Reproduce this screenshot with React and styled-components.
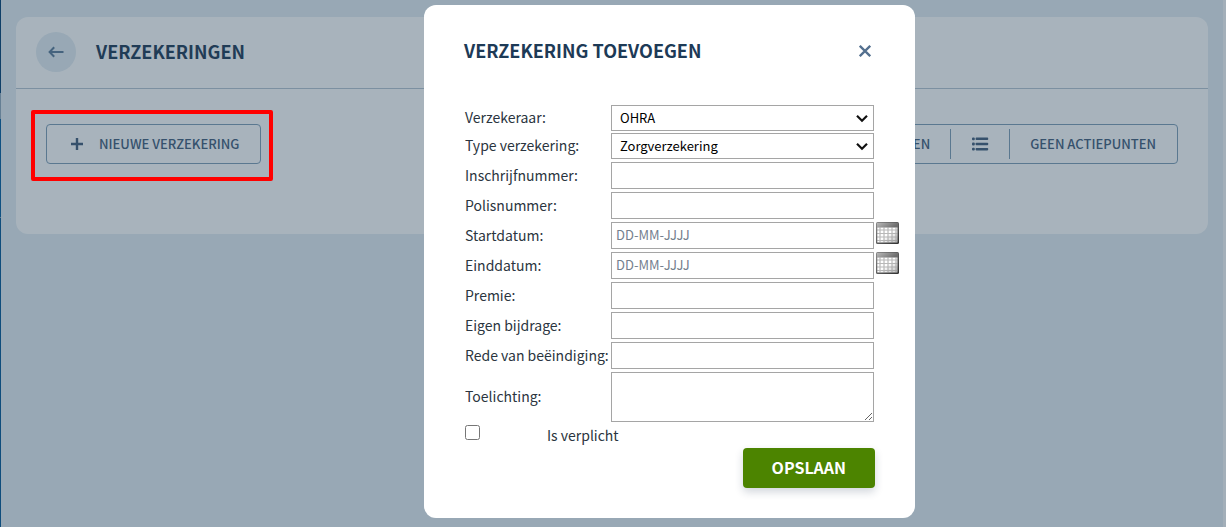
import React, { useState } from 'react';
import styled, { createGlobalStyle } from 'styled-components';

const GlobalStyle = createGlobalStyle`
  * {
    box-sizing: border-box;
  }
  body {
    margin: 0;
    background-color: #ffffff;
    color: #1d3a56;
    font-family: "Noto Sans CJK SC", "Noto Sans", sans-serif;
    font-size: 13px;
    line-height: 20px;
  }
  button, input, select, textarea {
    font-family: inherit;
    font-size: inherit;
    line-height: inherit;
  }
`;

const Styled = {
  Page: styled.div`
    display: flex;
    min-height: 100vh;
  `,
  SidebarEdge: styled.div`
    width: 1px;
    background-image: linear-gradient(
      to bottom,
      #003f74 0 93px,
      #8fa9bd 93px 119px,
      #005c9f 119px 217px,
      #7fa3c0 217px 218px,
      #005694 218px
    );
  `,
  Main: styled.main`
    flex: 1;
    padding: 17px 15px;
    background-color: #e4edf3;
  `,
  ScrollEdge: styled.div`
    width: 3px;
    background-color: #f7f9fb;
  `,
  Card: styled.section`
    border-radius: 12px;
    background-color: #ffffff;
  `,
  CardHeader: styled.header`
    display: flex;
    align-items: center;
    gap: 20px;
    padding: 15px 20px 16px;
    border-bottom: 1px solid #b6c5d2;
  `,
  BackButton: styled.button`
    display: flex;
    align-items: center;
    justify-content: center;
    width: 40px;
    height: 40px;
    padding: 0;
    border: 0;
    border-radius: 50%;
    background-color: #e4edf3;
    color: #5a7a98;
  `,
  Title: styled.h1`
    margin: 0;
    padding-bottom: 1px;
    font-size: 18px;
    font-weight: 700;
    line-height: 23px;
  `,
  Toolbar: styled.div`
    display: flex;
    justify-content: space-between;
    padding: 35px 30px 70px;
  `,
  Marked: styled.div`
    position: relative;
  `,
  Mark: styled.div`
    position: absolute;
    inset: -14px -12px -17px -15px;
    z-index: 20;
    border: 4px solid #ff0000;
    border-radius: 2px;
    pointer-events: none;
  `,
  ButtonGroup: styled.div`
    display: flex;
    align-items: center;
    height: 40px;
    padding: 0 1px;
    border: 1px solid #7d9db6;
    border-radius: 4px;
  `,
  ToolButton: styled.button`
    display: flex;
    align-items: center;
    gap: 13px;
    height: 30px;
    padding: 0 20px;
    border: 0;
    border-left: ${props => props.$divided ? '1px solid #7d9db6' : '0'};
    background: none;
    color: #415c7b;
    font-size: 13px;
    font-weight: 500;
  `,
  Overlay: styled.div`
    position: fixed;
    inset: 0;
    z-index: 10;
    display: flex;
    align-items: flex-start;
    justify-content: center;
    padding: 5px 0 5px 113px;
    overflow: auto;
    background-color: rgba(37, 65, 87, 0.4);
  `,
  Modal: styled.div`
    width: 491px;
    max-width: 100%;
    padding: 34px 40px 30px;
    border-radius: 12px;
    background-color: #ffffff;
  `,
  ModalHeader: styled.div`
    display: flex;
    align-items: center;
    justify-content: space-between;
    margin-bottom: 41px;
  `,
  CloseButton: styled.button`
    display: flex;
    padding: 4px;
    border: 0;
    background: none;
    color: #54708f;
  `,
  Row: styled.div`
    display: flex;
    align-items: center;
    padding: ${props => props.$compact ? '1px' : '2px 1px 1px'};
  `,
  Label: styled.label`
    flex: none;
    width: 146px;
    padding-bottom: 2px;
    font-size: 14px;
    color: #2b3540;
    white-space: nowrap;
  `,
  SelectBox: styled.div`
    position: relative;
    display: flex;
    flex: 1;
    min-width: 0;

    svg {
      position: absolute;
      top: 9px;
      right: 6px;
      pointer-events: none;
    }
  `,
  Select: styled.select`
    flex: 1;
    min-width: 0;
    height: 26px;
    padding: 0 24px 0 8px;
    appearance: none;
    border: 1px solid #a5a5a5;
    border-radius: 0;
    background-color: #ffffff;
    color: #000000;
  `,
  Input: styled.input`
    flex: 1;
    min-width: 0;
    height: 27px;
    padding: 0 4px 2px;
    border: 1px solid #a5a5a5;

    &::placeholder {
      color: #74808e;
    }
  `,
  TextArea: styled.textarea`
    flex: 1;
    min-width: 0;
    height: 50px;
    padding: 4px;
    border: 1px solid #a5a5a5;
  `,
  DateButton: styled.button`
    display: flex;
    align-self: flex-start;
    margin: 0 -25px 0 2px;
    padding: 0;
    border: 0;
    background: none;
  `,
  CheckRow: styled.div`
    display: flex;
    align-items: flex-start;
    gap: 67px;
    padding: 2px 1px 3px;
  `,
  Checkbox: styled.input`
    width: 15px;
    height: 15px;
    margin: 0;
  `,
  CheckLabel: styled.label`
    font-size: 14px;
    color: #2b3540;
  `,
  Actions: styled.div`
    display: flex;
    justify-content: flex-end;
  `,
  SaveButton: styled.button`
    height: 40px;
    padding: 0 29px 2px;
    border: 0;
    border-radius: 4px;
    background-color: #4c8400;
    box-shadow: 0 4px 8px rgba(30, 50, 80, 0.2);
    color: #ffffff;
    font-size: 16px;
    font-weight: 700;
  `,
};

const ArrowIcon = () => (
  <svg width="16" height="12" viewBox="0 0 16 12" fill="none" stroke="currentColor" strokeWidth="2" aria-hidden="true">
    <path d="M15.5 6H1.5M6.2 1.2 1.6 6 6.2 10.8" />
  </svg>
);

const PlusIcon = () => (
  <svg width="18" height="14" viewBox="0 0 18 14" fill="none" stroke="currentColor" strokeWidth="2.4" aria-hidden="true">
    <path d="M9 1v12M3 7h12" />
  </svg>
);

const ListIcon = () => (
  <svg width="18" height="14" viewBox="0 0 18 14" fill="currentColor" aria-hidden="true">
    <rect x="1" y="0.4" width="2.8" height="2.8" rx="1" />
    <rect x="1" y="5.6" width="2.8" height="2.8" rx="1" />
    <rect x="1" y="10.8" width="2.8" height="2.8" rx="1" />
    <rect x="4.6" y="0.6" width="12.6" height="2.4" rx="0.8" />
    <rect x="4.6" y="5.8" width="12.6" height="2.4" rx="0.8" />
    <rect x="4.6" y="11" width="12.6" height="2.4" rx="0.8" />
  </svg>
);

const CloseIcon = () => (
  <svg width="12" height="12" viewBox="0 0 12 12" fill="none" stroke="currentColor" strokeWidth="2.3" aria-hidden="true">
    <path d="M0.8 0.8 11.2 11.2M11.2 0.8 0.8 11.2" />
  </svg>
);

const ChevronIcon = () => (
  <svg width="12" height="9" viewBox="0 0 12 9" fill="none" stroke="#111111" strokeWidth="2.2" aria-hidden="true">
    <path d="M1 1.8 6 6.8 11 1.8" />
  </svg>
);

const CalendarIcon = () => (
  <svg width="23" height="22" viewBox="0 0 23 22" aria-hidden="true">
    <defs>
      <linearGradient id="calendarFrame" x1="0" y1="0" x2="1" y2="1">
        <stop offset="0" stopColor="#8c8c8c" />
        <stop offset="1" stopColor="#2e2e2e" />
      </linearGradient>
      <linearGradient id="calendarTop" x1="0" y1="0" x2="1" y2="0.3">
        <stop offset="0" stopColor="#b8b8b8" />
        <stop offset="1" stopColor="#6e6e6e" />
      </linearGradient>
      <linearGradient id="calendarPaper" x1="0" y1="0" x2="1" y2="1">
        <stop offset="0.5" stopColor="#ffffff" />
        <stop offset="1" stopColor="#bdbdbd" />
      </linearGradient>
    </defs>
    <rect width="23" height="22" rx="1.5" fill="url(#calendarFrame)" />
    <rect x="1" y="1" width="21" height="4.5" fill="url(#calendarTop)" />
    <rect x="1.3" y="5.5" width="20.2" height="15" fill="url(#calendarPaper)" />
    <path
      d="M1 8h21M1 11.5h21M1 15h21M1 18.5h21M4 5.5v15M8 5.5v15M12 5.5v15M16 5.5v15M20 5.5v15"
      stroke="#8a8a8a"
      strokeOpacity="0.6"
      strokeWidth="1.2"
    />
  </svg>
);

const fields = [
  { id: 'verzekeraar', label: 'Verzekeraar:', type: 'select', options: ['OHRA'] },
  { id: 'type', label: 'Type verzekering:', type: 'select', options: ['Zorgverzekering'] },
  { id: 'inschrijfnummer', label: 'Inschrijfnummer:', type: 'text' },
  { id: 'polisnummer', label: 'Polisnummer:', type: 'text' },
  { id: 'startdatum', label: 'Startdatum:', type: 'date' },
  { id: 'einddatum', label: 'Einddatum:', type: 'date' },
  { id: 'premie', label: 'Premie:', type: 'text' },
  { id: 'bijdrage', label: 'Eigen bijdrage:', type: 'text' },
  { id: 'rede', label: 'Rede van beëindiging:', type: 'text' },
  { id: 'toelichting', label: 'Toelichting:', type: 'textarea' },
];

function Field({ field }) {
  const { id, label, type, options } = field;

  return (
    <Styled.Row $compact={type === 'select'}>
      <Styled.Label htmlFor={id}>{label}</Styled.Label>
      {
        type === 'select' &&
        <Styled.SelectBox>
          <Styled.Select id={id}>
            { options.map((option) => <option key={option}>{option}</option>) }
          </Styled.Select>
          <ChevronIcon />
        </Styled.SelectBox>
      }
      { type === 'textarea' && <Styled.TextArea id={id} /> }
      {
        (type === 'text' || type === 'date') &&
        <Styled.Input id={id} type="text" placeholder={type === 'date' ? 'DD-MM-JJJJ' : undefined} />
      }
      {
        type === 'date' &&
        <Styled.DateButton type="button">
          <CalendarIcon />
        </Styled.DateButton>
      }
    </Styled.Row>
  );
}

function App() {
  const [open, setOpen] = useState(true);

  return (
    <>
      <GlobalStyle />
      <Styled.Page>
        <Styled.SidebarEdge />
        <Styled.Main>
          <Styled.Card>
            <Styled.CardHeader>
              <Styled.BackButton type="button">
                <ArrowIcon />
              </Styled.BackButton>
              <Styled.Title>VERZEKERINGEN</Styled.Title>
            </Styled.CardHeader>
            <Styled.Toolbar>
              <Styled.Marked>
                <Styled.ButtonGroup>
                  <Styled.ToolButton type="button" onClick={() => setOpen(true)}>
                    <PlusIcon />
                    NIEUWE VERZEKERING
                  </Styled.ToolButton>
                </Styled.ButtonGroup>
                <Styled.Mark />
              </Styled.Marked>
              <Styled.ButtonGroup>
                <Styled.ToolButton type="button">EN</Styled.ToolButton>
                <Styled.ToolButton type="button" $divided>
                  <ListIcon />
                </Styled.ToolButton>
                <Styled.ToolButton type="button" $divided>GEEN ACTIEPUNTEN</Styled.ToolButton>
              </Styled.ButtonGroup>
            </Styled.Toolbar>
          </Styled.Card>
        </Styled.Main>
        <Styled.ScrollEdge />
      </Styled.Page>
      {
        open &&
        <Styled.Overlay>
          <Styled.Modal role="dialog" aria-labelledby="modal-title">
            <Styled.ModalHeader>
              <Styled.Title as="h2" id="modal-title">VERZEKERING TOEVOEGEN</Styled.Title>
              <Styled.CloseButton type="button" onClick={() => setOpen(false)}>
                <CloseIcon />
              </Styled.CloseButton>
            </Styled.ModalHeader>
            <form onSubmit={(e) => e.preventDefault()}>
              { fields.map((field) => <Field key={field.id} field={field} />) }
              <Styled.CheckRow>
                <Styled.Checkbox id="verplicht" type="checkbox" />
                <Styled.CheckLabel htmlFor="verplicht">Is verplicht</Styled.CheckLabel>
              </Styled.CheckRow>
              <Styled.Actions>
                <Styled.SaveButton type="submit">OPSLAAN</Styled.SaveButton>
              </Styled.Actions>
            </form>
          </Styled.Modal>
        </Styled.Overlay>
      }
    </>
  );
}

export default App;
